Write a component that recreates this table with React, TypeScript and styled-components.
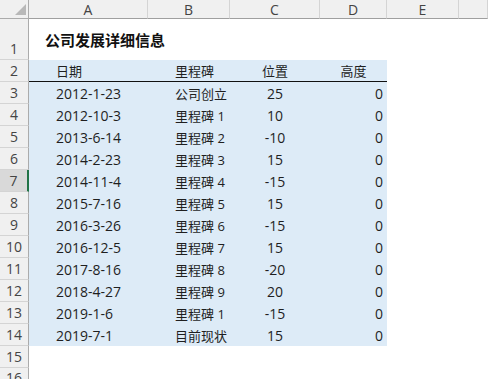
import styled, { createGlobalStyle } from 'styled-components';

const GlobalStyle = createGlobalStyle`
  html, body {
    margin: 0;
    padding: 0;
    background: #ffffff;
    overflow: hidden;
  }
`;

const Sheet = styled.div`
  display: grid;
  grid-template-columns: 29px 119px 82px 90px 67px 72px 1fr;
  grid-template-rows: 19px 41px repeat(14, 22px);
  width: 488px;
  height: 379px;
  overflow: hidden;
  font-family: "Open Sans", "Noto Sans CJK SC", sans-serif;
  color: #1f1f1f;
`;

const Corner = styled.div`
  background: #f0f0f0;
  border-right: 1px solid #ababab;
  border-bottom: 1px solid #ababab;
  box-sizing: border-box;
  display: flex;
  align-items: flex-end;
  justify-content: flex-end;
  padding: 0 2px 3px 0;
`;

const ColHeader = styled.div`
  background: #f0f0f0;
  border-right: 1px solid #d4d4d4;
  border-bottom: 1px solid #9f9f9f;
  box-sizing: border-box;
  display: flex;
  align-items: center;
  justify-content: center;
  font-size: 14px;
  color: #444444;
`;

const RowHeader = styled.div<{ $active?: boolean }>`
  background: ${p => (p.$active ? '#d9d9d9' : '#f0f0f0')};
  border-right: ${p => (p.$active ? '2px solid #217346' : '1px solid #ababab')};
  border-bottom: 1px solid #d4d4d4;
  box-sizing: border-box;
  display: flex;
  align-items: flex-end;
  justify-content: center;
  padding-bottom: 1px;
  font-size: 14px;
  color: #444444;
`;

const Cell = styled.div<{
  $fill?: boolean;
  $align?: 'left' | 'center' | 'right';
  $underline?: boolean;
  $cjk?: boolean;
}>`
  background: ${p => (p.$fill ? '#ddebf7' : '#ffffff')};
  border-bottom: ${p => (p.$underline ? '1px solid #111111' : 'none')};
  box-sizing: border-box;
  display: flex;
  align-items: center;
  justify-content: ${p =>
    p.$align === 'center' ? 'center' : p.$align === 'right' ? 'flex-end' : 'flex-start'};
  padding: ${p => (p.$align === 'right' ? '0 4px 0 0' : p.$align === 'center' ? '0' : '0 0 0 27px')};
  font-size: ${p => (p.$cjk ? '13px' : '14px')};
  white-space: nowrap;
`;

const TitleCell = styled.div`
  grid-column: span 6;
  display: flex;
  align-items: center;
  padding-left: 16px;
  font-family: "Noto Sans CJK SC", sans-serif;
  font-size: 15px;
  font-weight: 700;
  color: #111111;
  white-space: nowrap;
`;

const CornerMark = () => (
  <svg width="11" height="11" viewBox="0 0 11 11">
    <polygon points="11,0 11,11 0,11" fill="#b8b8b8" />
  </svg>
);

const columns = ['A', 'B', 'C', 'D', 'E', ''];

const rows = [
  ['2012-1-23', '公司创立', '25', '0'],
  ['2012-10-3', '里程碑 1', '10', '0'],
  ['2013-6-14', '里程碑 2', '-10', '0'],
  ['2014-2-23', '里程碑 3', '15', '0'],
  ['2014-11-4', '里程碑 4', '-15', '0'],
  ['2015-7-16', '里程碑 5', '15', '0'],
  ['2016-3-26', '里程碑 6', '-15', '0'],
  ['2016-12-5', '里程碑 7', '15', '0'],
  ['2017-8-16', '里程碑 8', '-20', '0'],
  ['2018-4-27', '里程碑 9', '20', '0'],
  ['2019-1-6', '里程碑 1', '-15', '0'],
  ['2019-7-1', '目前现状', '15', '0'],
];

const Row = ({ num, data }: { num: number; data: string[] }) => (
  <>
    <RowHeader $active={num === 7}>{num}</RowHeader>
    <Cell $fill>{data[0]}</Cell>
    <Cell $fill $cjk>{data[1]}</Cell>
    <Cell $fill $align="center">{data[2]}</Cell>
    <Cell $fill $align="right">{data[3]}</Cell>
    <Cell />
    <Cell />
  </>
);

const EmptyRow = ({ num }: { num: number }) => (
  <>
    <RowHeader>{num}</RowHeader>
    <Cell />
    <Cell />
    <Cell />
    <Cell />
    <Cell />
    <Cell />
  </>
);

const App = () => (
  <>
    <GlobalStyle />
    <Sheet>
      <Corner>
        <CornerMark />
      </Corner>
      {columns.map((c, i) => (
        <ColHeader key={i}>{c}</ColHeader>
      ))}

      <RowHeader>1</RowHeader>
      <TitleCell>公司发展详细信息</TitleCell>

      <RowHeader>2</RowHeader>
      <Cell $fill $underline $cjk>日期</Cell>
      <Cell $fill $underline $cjk>里程碑</Cell>
      <Cell $fill $underline $cjk $align="center">位置</Cell>
      <Cell $fill $underline $cjk $align="center">高度</Cell>
      <Cell />
      <Cell />

      {rows.map((r, i) => (
        <Row key={i} num={i + 3} data={r} />
      ))}

      {[15, 16].map(n => (
        <EmptyRow key={n} num={n} />
      ))}
    </Sheet>
  </>
);

export default App;
